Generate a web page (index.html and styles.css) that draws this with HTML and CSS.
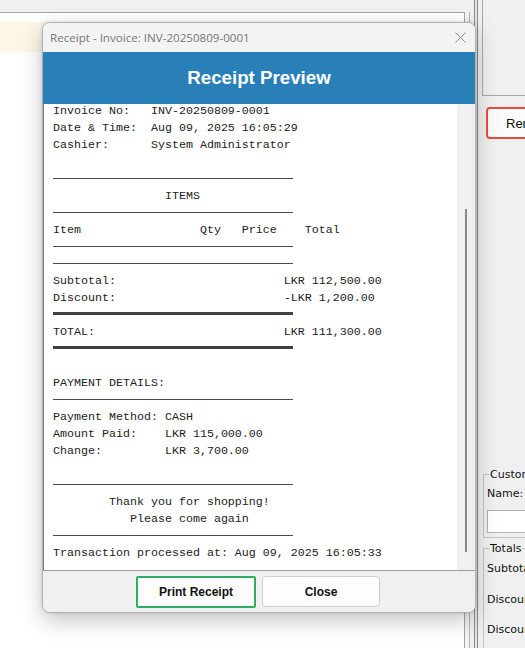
FILE: index.html
```html
<!DOCTYPE html>
<html lang="en">
<head>
<meta charset="utf-8">
<title>Receipt Preview</title>
<link rel="stylesheet" href="styles.css">
</head>
<body>
<div class="app">
  <div class="left">
    <div class="pane">
      <div class="table">
        <div class="row-hl"></div>
      </div>
    </div>
  </div>
  <div class="divider"></div>
  <div class="right">
    <div class="topbox"></div>
    <button class="remove-btn">Remove Item</button>
    <fieldset class="group customer">
      <legend>Customer</legend>
      <div class="lbl">Name:</div>
      <div class="input"></div>
    </fieldset>
    <fieldset class="group totals">
      <legend>Totals</legend>
      <div class="lbl t1">Subtotal:</div>
      <div class="lbl t2">Discount:</div>
      <div class="lbl t3">Discount %:</div>
    </fieldset>
  </div>
</div>

<div class="dialog">
  <div class="titlebar">
    <span class="title">Receipt - Invoice: INV-20250809-0001</span>
    <svg class="close" width="11" height="11" viewBox="0 0 11 11"><path d="M0.5 0.5 L10.5 10.5 M10.5 0.5 L0.5 10.5" stroke="#8a8a8a" stroke-width="1" fill="none"/></svg>
  </div>
  <div class="header">Receipt Preview</div>
  <div class="body">
    <div class="receipt">
      <div class="content">
        <div class="ln">Invoice No:   INV-20250809-0001</div>
        <div class="ln">Date &amp; Time:  Aug 09, 2025 16:05:29</div>
        <div class="ln">Cashier:      System Administrator</div>
        <div class="ln"> </div>
        <div class="sep"></div>
        <div class="ln">                ITEMS</div>
        <div class="sep"></div>
        <div class="ln">Item                 Qty   Price    Total</div>
        <div class="sep"></div>
        <div class="sep"></div>
        <div class="ln">Subtotal:                        LKR 112,500.00</div>
        <div class="ln">Discount:                        -LKR 1,200.00</div>
        <div class="sep thick"></div>
        <div class="ln">TOTAL:                           LKR 111,300.00</div>
        <div class="sep thick"></div>
        <div class="ln"> </div>
        <div class="ln">PAYMENT DETAILS:</div>
        <div class="sep"></div>
        <div class="ln">Payment Method: CASH</div>
        <div class="ln">Amount Paid:    LKR 115,000.00</div>
        <div class="ln">Change:         LKR 3,700.00</div>
        <div class="ln"> </div>
        <div class="sep"></div>
        <div class="ln">        Thank you for shopping!</div>
        <div class="ln">           Please come again</div>
        <div class="sep"></div>
        <div class="ln">Transaction processed at: Aug 09, 2025 16:05:33</div>
      </div>
    </div>
    <div class="scrollbar"><div class="thumb"></div></div>
  </div>
  <div class="footer">
    <button class="btn primary">Print Receipt</button>
    <button class="btn">Close</button>
  </div>
</div>
</body>
</html>
```

FILE: styles.css
```css
html, body {
  margin: 0;
  padding: 0;
}
body {
  width: 525px;
  height: 648px;
  overflow: hidden;
  background: #f0f0f0;
  font-family: "Liberation Sans", Arial, sans-serif;
  position: relative;
}
.app {
  display: flex;
  height: 648px;
}
.left {
  width: 474px;
  flex: none;
  background: #f0f0f0;
}
.pane {
  width: 469px;
  height: 648px;
  border-right: 1px solid #b4b4b4;
  background: #f3f3f3;
}
.table {
  margin-top: 12px;
  width: 464px;
  height: 636px;
  border-top: 1px solid #a4a4a4;
  border-right: 1px solid #a4a4a4;
  background: #ffffff;
}
.row-hl {
  margin-top: 9px;
  height: 30px;
  background: #fcf6e6;
}
.divider {
  width: 2px;
  flex: none;
  border-left: 1px solid #8a8a8a;
  border-right: 1px solid #8a8a8a;
  background: #e6e6e6;
}
.right {
  flex: 1;
  min-width: 0;
  overflow: hidden;
  background: #f0f0f0;
  display: flex;
  flex-direction: column;
}
.topbox {
  margin-left: 4px;
  height: 95px;
  border-left: 1px solid #a8a8a8;
  border-bottom: 1px solid #a8a8a8;
  background: #f0f0f0;
  flex: none;
}
.remove-btn {
  margin: 11px 0 0 8px;
  height: 32px;
  width: 90px;
  flex: none;
  text-align: left;
  padding: 0 0 0 18px;
  border: 2px solid #e74c3c;
  border-radius: 4px;
  background: #fbfbfb;
  font-family: "Liberation Sans", Arial, sans-serif;
  font-size: 13px;
  color: #111;
  white-space: nowrap;
}
.group {
  margin: 0 0 0 5px;
  padding: 0 0 0 3px;
  border: 1px solid #c4c4c4;
  border-right: none;
  width: 80px;
  flex: none;
  font-family: "DejaVu Sans", sans-serif;
  font-size: 11px;
  color: #111;
  white-space: nowrap;
}
.group legend {
  padding: 0 1px;
  margin-left: 2px;
  font-size: 11px;
}
.customer {
  margin-top: 329px;
  height: 68px;
}
.customer .lbl {
  margin-top: 6px;
}
.customer .input {
  margin-top: 10px;
  height: 21px;
  width: 60px;
  background: #fff;
  border: 1px solid #b0b0b0;
}
.totals {
  margin-top: 4px;
  height: 120px;
}
.totals .t1 { margin-top: 7px; }
.totals .t2 { margin-top: 18px; }
.totals .t3 { margin-top: 17px; }

/* dialog */
.dialog {
  position: absolute;
  left: 42px;
  top: 22px;
  width: 432px;
  height: 589px;
  border: 1px solid #b0b0b0;
  border-radius: 8px;
  background: #f0f0f0;
  box-shadow: 0 8px 22px rgba(0, 0, 0, 0.22), 0 0 4px rgba(0, 0, 0, 0.12);
  overflow: hidden;
  display: flex;
  flex-direction: column;
}
.titlebar {
  height: 29px;
  flex: none;
  background: #f3f3f3;
  display: flex;
  align-items: center;
  justify-content: space-between;
  padding: 0 9px 0 7px;
}
.title {
  font-family: "Open Sans", "Noto Sans", sans-serif;
  font-size: 11.6px;
  color: #767676;
}
.header {
  height: 52px;
  flex: none;
  background: #2980b9;
  color: #ffffff;
  font-family: "Liberation Sans", Arial, sans-serif;
  font-weight: bold;
  font-size: 18.7px;
  display: flex;
  align-items: center;
  justify-content: center;
}
.body {
  height: 466px;
  flex: none;
  display: flex;
  border-bottom: 1px solid #9a9a9a;
}
.receipt {
  flex: 1;
  background: #ffffff;
  border-left: 1px solid #7c7c7c;
  overflow: hidden;
  padding-left: 9px;
}
.content {
  margin-top: -1px;
  font-family: "Liberation Mono", "Courier New", monospace;
  font-size: 11.667px;
  line-height: 17px;
  color: #222;
}
.ln {
  height: 17px;
  white-space: pre;
}
.sep {
  height: 17px;
  display: flex;
  align-items: center;
}
.sep::before {
  content: "";
  width: 240px;
  margin-top: -2px;
  border-top: 1px solid #4a4a4a;
}
.sep.thick::before {
  margin-top: -5px;
  border-top: 3px solid #404040;
}
.scrollbar {
  width: 18px;
  flex: none;
  background: #f0f0f0;
  padding-left: 8px;
  box-sizing: border-box;
}
.thumb {
  margin-top: 105px;
  width: 2px;
  height: 343px;
  background: #8a8a8a;
}
.footer {
  flex: 1;
  display: flex;
  justify-content: center;
  align-items: flex-start;
  gap: 6px;
  padding: 5px 2px 0 0;
  background: #f0f0f0;
}
.btn {
  width: 118px;
  height: 31px;
  border: 1px solid #cfcfcf;
  border-radius: 4px;
  background: #fdfdfd;
  font-family: "Liberation Sans", Arial, sans-serif;
  font-weight: bold;
  font-size: 12px;
  color: #111;
  padding: 0;
}
.btn.primary {
  width: 120px;
  height: 32px;
  border: 2px solid #2eae62;
  border-radius: 2px;
}
```
